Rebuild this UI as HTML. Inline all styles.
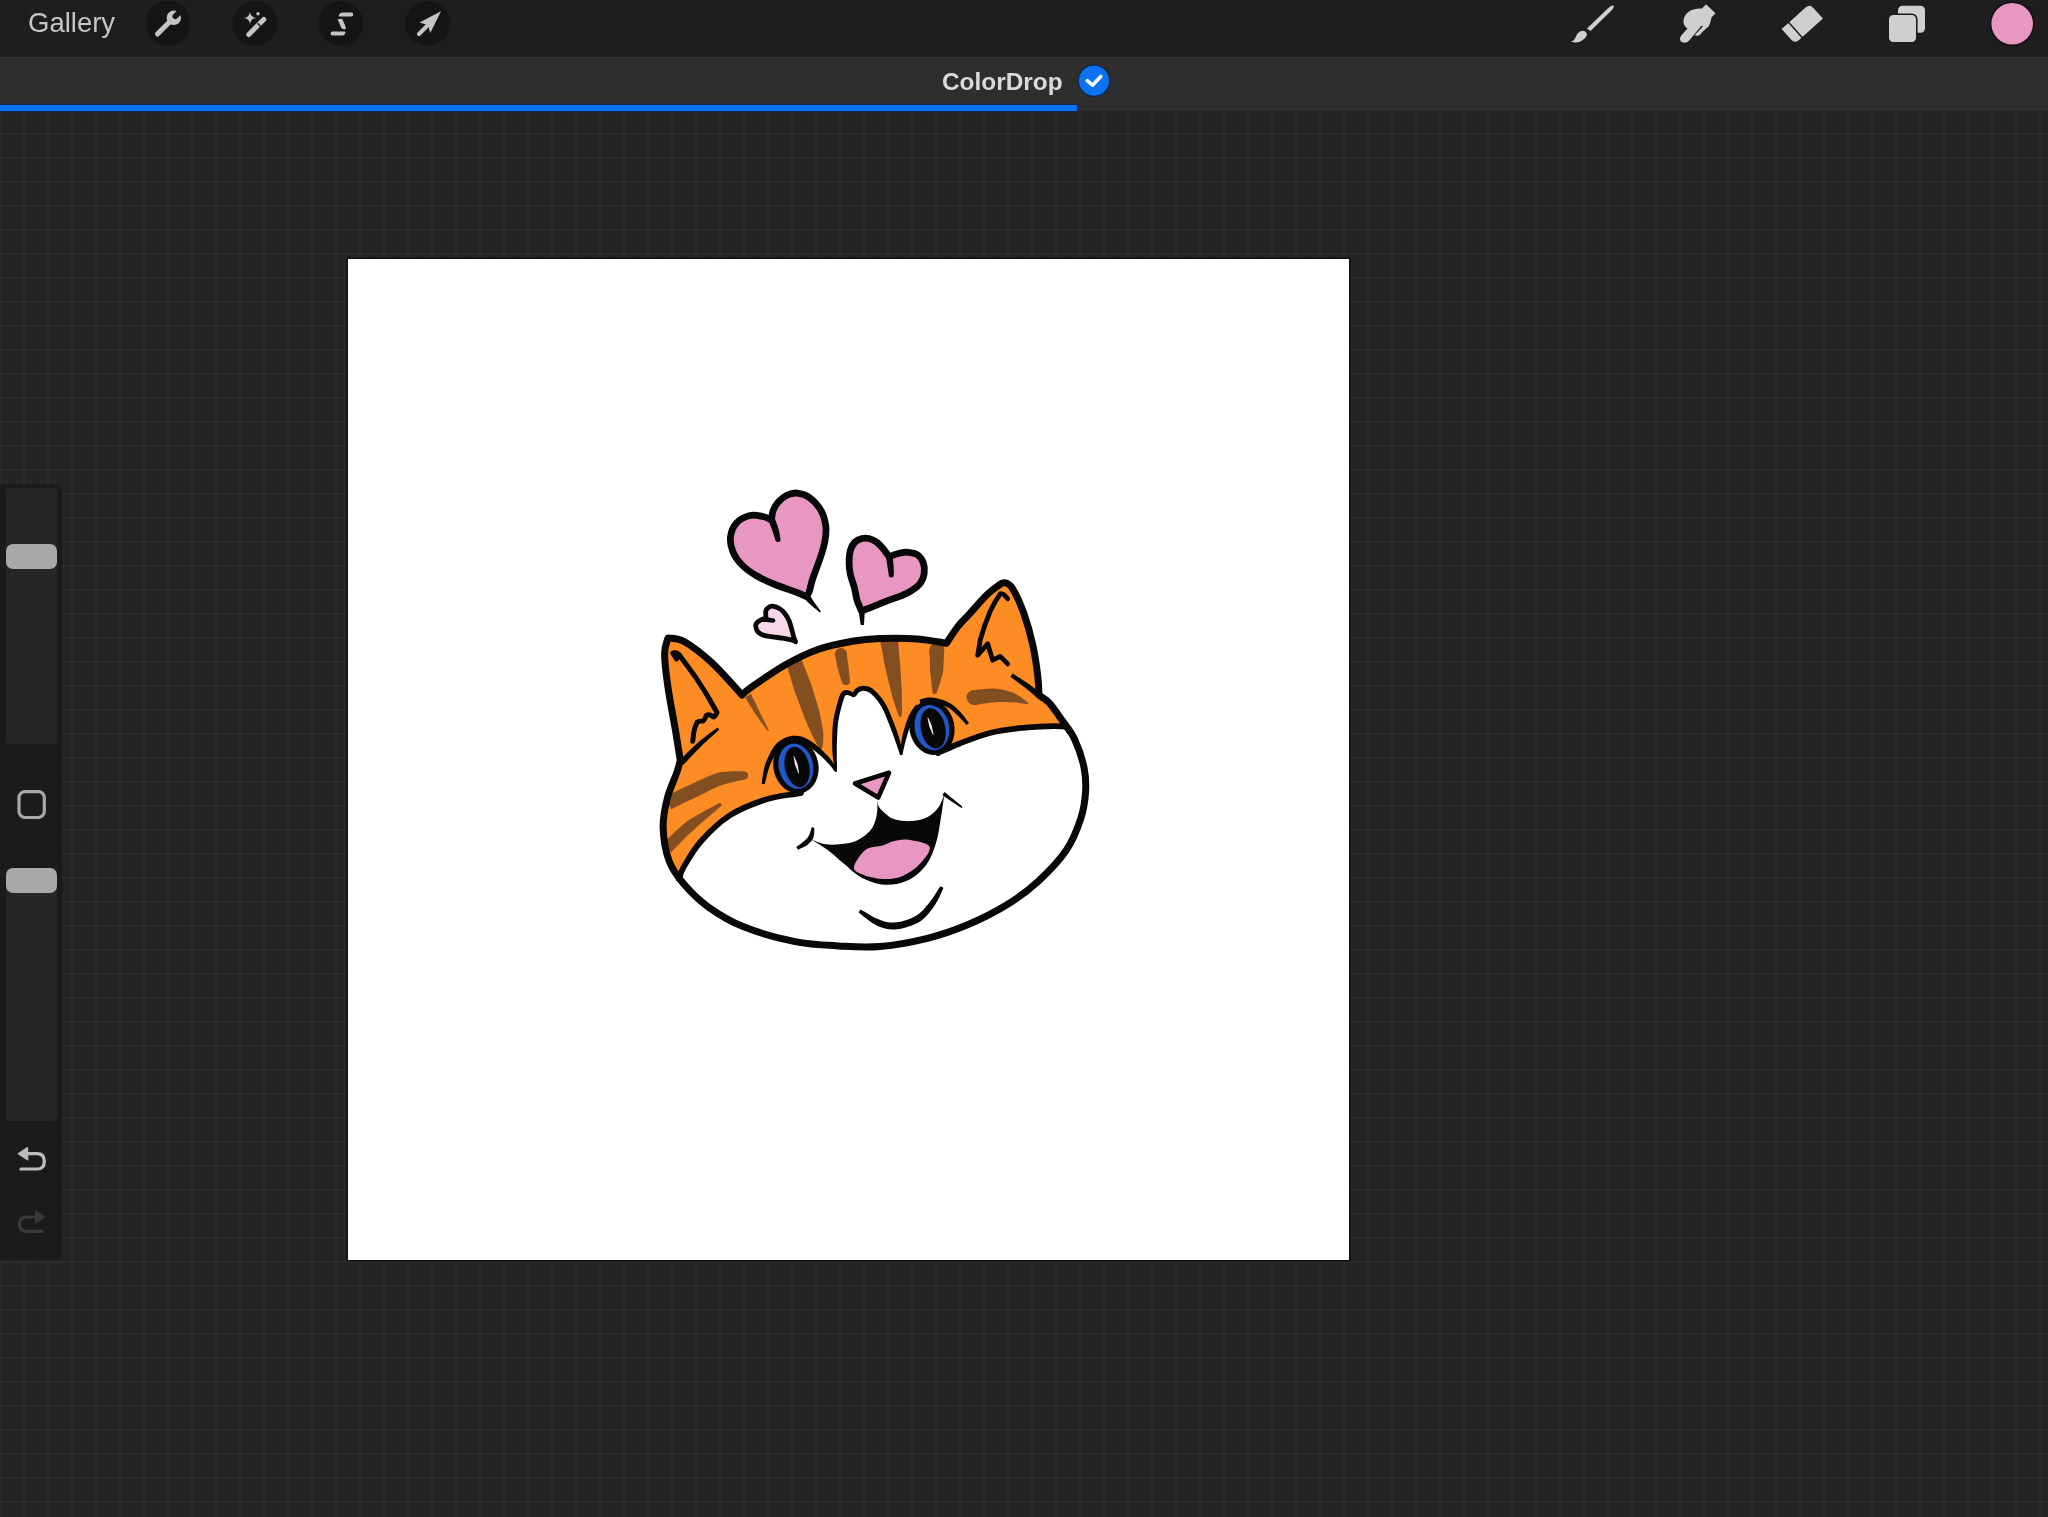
<!DOCTYPE html>
<html><head><meta charset="utf-8">
<style>
html,body{margin:0;padding:0;width:2048px;height:1517px;overflow:hidden;background:#242424;font-family:"Liberation Sans",sans-serif;}
.abs{position:absolute;}
#gallery,#title{will-change:transform;}
#grid{left:0;top:110px;width:2048px;height:1407px;
 background-color:#242424;
 background-image:linear-gradient(to right,#2c2c2c 0,#2c2c2c 2px,transparent 2px),linear-gradient(to bottom,#2c2c2c 0,#2c2c2c 2px,transparent 2px);
 background-size:24px 24px;background-position:-1px 23px;}
#top{left:0;top:0;width:2048px;height:57px;background:#1e1e1e;}
#tab{left:0;top:57px;width:2048px;height:53px;background:#2e2e2e;}
#prog{left:0;top:104.5px;width:1077px;height:6.5px;background:#0a74f0;box-shadow:0 0 1.5px 1px #0b2a55;}
#gallery{left:28px;top:5px;font-size:27.5px;color:#c6c6c6;line-height:36px;}
#title{left:942px;top:67.5px;font-size:24.4px;font-weight:bold;color:#dadada;line-height:28px;}
#canvas{left:348px;top:259px;width:1001px;height:1001px;background:#fff;box-shadow:0 0 0 1.5px #101010;}
#side{left:0;top:484px;width:62px;height:776px;background:#1b1b1b;border-radius:0 6px 6px 0;}
.track{position:absolute;left:6px;width:51px;background:#262626;border-radius:4px;}
.thumb{position:absolute;left:6px;width:51px;height:25px;background:#a9a9a9;border-radius:7px;}
</style></head><body>
<div id="grid" class="abs"></div>
<div id="top" class="abs"></div>
<div id="tab" class="abs"></div>
<div id="prog" class="abs"></div>
<div id="gallery" class="abs">Gallery</div>
<div id="title" class="abs">ColorDrop</div>
<svg class="abs" style="left:0;top:0" width="2048" height="110" viewBox="0 0 2048 110">
 <g fill="#151515">
  <circle cx="168" cy="23.5" r="22.5"/><circle cx="255" cy="23.5" r="22.5"/>
  <circle cx="341" cy="23.5" r="22.5"/><circle cx="427.5" cy="23.5" r="22.5"/>
 </g>
 <circle cx="2012.2" cy="23.8" r="22.5" fill="#150d12"/>
 <circle cx="2012.2" cy="23.8" r="20.8" fill="#e897c3"/>
 <g fill="#cfcfcf" stroke="none">
  <g fill="#c4c4c4"><!-- wrench -->
  <line x1="157.5" y1="34" x2="170" y2="21.5" stroke="#c4c4c4" stroke-width="5" stroke-linecap="round"/>
  <circle cx="173.8" cy="17.8" r="7.2"/>
  <line x1="175.3" y1="16.3" x2="183" y2="8.6" stroke="#151515" stroke-width="5.6" stroke-linecap="round"/>
  <!-- wand -->
  <line x1="248.8" y1="34.5" x2="263.8" y2="19.5" stroke="#c4c4c4" stroke-width="5" stroke-linecap="round"/>
  <line x1="257.5" y1="23.2" x2="261" y2="26.7" stroke="#151515" stroke-width="1.3"/>
  <path d="M250 11.8 Q250.5 17.5 256.3 18 Q250.5 18.5 250 24.2 Q249.5 18.5 243.7 18 Q249.5 17.5 250 11.8Z"/>
  <circle cx="258" cy="13.8" r="1.7"/>
  <!-- selection S -->
  <path d="M338.6 15.2 Q339.5 12.6 342.5 12.6 L351.5 12.6 Q353.2 12.6 353.2 14.5 Q353.2 16.4 351.5 16.4 L339.5 16.4 Z"/>
  <path d="M337.6 19.2 L342.2 18.8 L345.6 26.8 Q346.3 29 345 29.6 L341.6 28.6 Z"/>
  <path d="M345.6 32.8 Q344.6 35.6 341.6 35.6 L332.4 35.6 Q330.6 35.6 330.6 33.6 Q330.6 31.6 332.4 31.6 L344.6 31.6 Z"/>
  <!-- arrow -->
  <line x1="419" y1="34" x2="431" y2="22" stroke="#c4c4c4" stroke-width="4" stroke-linecap="round"/>
  <path d="M441 11.2 L419.5 22.6 L428 25 L430.3 33 Z"/>
  </g><!-- brush -->
  <path d="M1613.5 5.5 Q1614.5 6.5 1612 10 L1590.5 31 L1587 28.5 L1607.5 8.8 Q1611.5 5 1613.5 5.5Z"/>
  <path d="M1586.8 33.2 Q1584 29.6 1580 31.5 Q1576.5 33.5 1575.5 37.5 Q1574.5 40.6 1571.2 41.8 Q1578 43.5 1582.5 40.2 Q1587.5 36.8 1586.8 33.2Z"/>
  <!-- smudge finger -->
  <path d="M1706 4.3 L1715.5 13.3 L1711.5 17.6 Q1710.8 22 1708.8 26.2 L1702.5 31.8 Q1700 35.8 1697 35.8 Q1695.5 36 1694.8 35 L1703 26.5 L1701.5 25.8 L1689.6 40 Q1687 43.5 1683.5 42.5 Q1679.5 41.5 1680 38.2 Q1680.5 36 1683 33.5 L1687.5 28.5 Q1683 25.5 1683.5 20.5 Q1684 14.5 1690.5 10.5 Q1696.8 7.8 1702 8.6 Z"/>
  <!-- eraser -->
  <g transform="translate(1802.3 23.8) rotate(-42) scale(0.92)">
   <path d="M-11 -10.8 L14.5 -10.8 Q20.5 -10.8 20.5 -4.8 L20.5 10.8 L-14.5 10.8 Q-20.5 10.8 -20.5 4.8 L-20.5 -10.8 Z"/>
   <line x1="-10" y1="-12" x2="-10" y2="12" stroke="#1c1c1c" stroke-width="1.6"/>
  </g>
  <!-- layers -->
  <rect x="1898" y="5.8" width="27" height="27" rx="4.5"/>
  <rect x="1888.2" y="14.2" width="28.6" height="28.6" rx="5" stroke="#1c1c1c" stroke-width="1.6"/>
 </g>
 <!-- check -->
 <circle cx="1094" cy="80.7" r="16.2" fill="#0b2a55"/>
 <circle cx="1094" cy="80.7" r="15" fill="#0d72f0"/>
 <path d="M1087.3 80.6 L1092.5 85.2 L1100.8 76.4" fill="none" stroke="#f4f8ff" stroke-width="3.6" stroke-linecap="round" stroke-linejoin="round"/>
</svg>
<div id="side" class="abs">
 <div class="track" style="top:4px;height:256px"></div>
 <div class="thumb" style="top:60px"></div>
 <div class="track" style="top:384px;height:253px"></div>
 <div class="thumb" style="top:384px"></div>
</div>
<svg class="abs" style="left:0;top:760px" width="70" height="480" viewBox="0 760 70 480">
 <rect x="19" y="791.7" width="25.3" height="25.8" rx="6" fill="none" stroke="#a9a9a9" stroke-width="3.2"/>
 <path d="M26 1153.7 L37 1153.7 Q44.3 1153.7 44.3 1161.4 Q44.3 1169 37 1169 L21 1169" fill="none" stroke="#bdbdbd" stroke-width="3.2" stroke-linecap="round"/>
 <path d="M18.2 1153.7 L27.5 1147.6 L27.8 1160 Z" fill="#bdbdbd" stroke="#bdbdbd" stroke-width="1.2" stroke-linejoin="round"/>
 <path d="M36 1217 L27 1217 Q19.5 1217 19.5 1224.2 Q19.5 1231.4 27 1231.4 L42 1231.4" fill="none" stroke="#3a3a3a" stroke-width="3.2" stroke-linecap="round"/>
 <path d="M44.4 1217 L35.6 1211 L35.4 1223 Z" fill="#3a3a3a" stroke="#3a3a3a" stroke-width="1.2" stroke-linejoin="round"/>
</svg>
<div id="canvas" class="abs"></div>
<!--CAT--><svg class="abs" style="left:0;top:0" width="2048" height="1517" viewBox="0 0 2048 1517">
<path d="M668 638C670.6 638.5 676.4 637.2 683.7 641.3C691 645.4 702.1 653.8 711.8 662.7C721.5 671.7 737 689.6 742 695C743.5 693.7 743.9 692.4 751.1 687.4C758.3 682.4 773.8 671.4 785 665C796.2 658.6 807.3 653.2 818.5 649.2C829.7 645.2 842 643.1 852.2 641.3C862.5 639.5 869.1 638.9 880 638.5C890.9 638.1 906.5 638.1 917.6 638.9C928.7 639.7 941.6 642.6 946.4 643.3C948.3 640.5 954.3 631.1 958 626.4C961.7 621.6 965.1 618.7 968.6 614.8C972.1 610.9 975.9 606.7 979.1 603.2C982.3 599.7 984.7 596.8 987.7 594C990.7 591.2 994.1 588.5 996.9 586.6C999.7 584.7 1001.9 582.4 1004.5 582.8C1007.1 583.2 1009.5 583.6 1012.7 588.8C1016 594 1020.6 604.4 1024 613.8C1027.3 623.2 1030.5 634.7 1032.8 645.1C1035.1 655.5 1036.8 668 1037.8 676.4C1038.8 684.8 1038.8 692.1 1039 695.2C1040.7 696.5 1045.2 698.6 1049 702.7C1052.8 706.8 1057.7 714 1061.9 720C1066.2 726 1070.8 731.1 1074.5 739C1078.2 746.9 1082.2 758.7 1084 767.4C1085.8 776.1 1086.1 782.8 1085.6 791.2C1085.1 799.7 1084.1 808.4 1080.9 818.1C1077.7 827.9 1073.7 839.2 1066.6 849.7C1059.5 860.2 1048.2 872.1 1038.2 881.3C1028.2 890.5 1018.4 897.7 1006.5 905C994.6 912.3 980.2 919.5 967 925C953.8 930.5 941.9 934.7 927.4 938.3C912.9 941.9 894.8 945.2 880 946.5C865.2 947.8 852.7 946.7 838.5 945.9C824.3 945.1 810.7 944.7 795 941.6C779.3 938.5 758.8 932.9 744.3 927.1C729.8 921.3 718.1 914 708 906.8C697.9 899.5 689.9 891.3 683.4 883.6C676.9 875.9 672.3 869.8 668.9 860.4C665.5 851 663.4 837.4 663.1 827C662.9 816.6 665.1 807.2 667.4 798C669.7 788.8 674.9 778.3 677 772C679.1 765.7 679.8 762.3 680.3 760.4C679.5 755.7 677.8 744.5 675.8 732.3C673.8 720.1 669.9 700.5 668 687.4C666.1 674.3 664.6 661.9 664.6 653.7C664.6 645.5 667.4 640.6 668 638Z" fill="#fff"/>
<defs><clipPath id="oc"><path d="M679 879C677.3 875.9 671.5 869.1 668.9 860.4C666.2 851.7 663.4 837.4 663.1 827C662.9 816.6 665.1 807.2 667.4 798C669.7 788.8 674.9 778.3 677 772C679.1 765.7 679.8 762.3 680.3 760.4C679.5 755.7 677.8 744.5 675.8 732.3C673.8 720.1 669.9 700.5 668 687.4C666.1 674.3 664.6 661.9 664.6 653.7C664.6 645.5 667.4 640.6 668 638C670.6 638.5 676.4 637.2 683.7 641.3C691 645.4 702.1 653.8 711.8 662.7C721.5 671.7 737 689.6 742 695C743.5 693.7 743.9 692.4 751.1 687.4C758.3 682.4 773.8 671.4 785 665C796.2 658.6 807.3 653.2 818.5 649.2C829.7 645.2 842 643.1 852.2 641.3C862.5 639.5 869.1 638.9 880 638.5C890.9 638.1 906.5 638.1 917.6 638.9C928.7 639.7 941.6 642.6 946.4 643.3C948.3 640.5 954.3 631.1 958 626.4C961.7 621.6 965.1 618.7 968.6 614.8C972.1 610.9 975.9 606.7 979.1 603.2C982.3 599.7 984.7 596.8 987.7 594C990.7 591.2 994.1 588.5 996.9 586.6C999.7 584.7 1001.9 582.4 1004.5 582.8C1007.1 583.2 1009.5 583.6 1012.7 588.8C1016 594 1020.6 604.4 1024 613.8C1027.3 623.2 1030.5 634.7 1032.8 645.1C1035.1 655.5 1036.8 668 1037.8 676.4C1038.8 684.8 1038.8 692.1 1039 695.2C1040.7 696.5 1045.2 698.6 1049 702.7C1052.8 706.8 1058.7 715.5 1061.9 720C1065.1 724.5 1067 728.3 1068 730C1067 729.4 1069.5 726.6 1061.9 726.3C1054.3 725.9 1034.2 726.8 1022.3 727.9C1010.4 729 1001.2 730.1 990.7 732.7C980.2 735.3 967.5 740.6 959.1 743.7C950.7 746.9 945.8 751.9 940.1 751.6C934.4 751.3 929.7 746.9 925 742C920.3 737.1 914.2 725.3 912 722C910.8 724.5 906.3 731.4 904.5 736.7C902.7 742 901.8 751.1 901.2 754C900.7 752 899.6 747 898 742C896.4 737 894.1 730 891.6 723.8C889.1 717.5 886.2 709.9 883 704.5C879.8 699.1 875.4 694.3 872.2 691.6C869 688.9 866.1 688.5 863.6 688.3C861.1 688.1 858.8 689.4 857.2 690.5C855.6 691.6 855.8 694.4 854 694.8C852.2 695.1 848.4 692.3 846.4 692.6C844.4 692.9 843.7 692.3 842 696.5C840.3 700.7 837.5 711.9 836.3 718C835.1 724.1 835.1 727.3 834.8 733C834.5 738.7 834.4 745.6 834.6 752C834.8 758.4 835.8 768.2 836 771.5C834.9 769.7 832.5 764.8 829.1 760.9C825.8 757 820.8 747.6 815.9 748.3C811 749 802.6 757.7 800 765C797.4 772.3 800 787.5 800 792C799.4 792.3 801.8 792.5 796.1 793.8C790.4 795 777 795.9 766 799.5C755 803.1 740.7 808.4 729.8 815.4C718.9 822.4 708.5 832.8 700.8 841.5C693.1 850.2 687 861.4 683.4 867.6C679.8 873.9 679.7 877.1 679 879Z"/></clipPath></defs>
<path d="M679 879C677.3 875.9 671.5 869.1 668.9 860.4C666.2 851.7 663.4 837.4 663.1 827C662.9 816.6 665.1 807.2 667.4 798C669.7 788.8 674.9 778.3 677 772C679.1 765.7 679.8 762.3 680.3 760.4C679.5 755.7 677.8 744.5 675.8 732.3C673.8 720.1 669.9 700.5 668 687.4C666.1 674.3 664.6 661.9 664.6 653.7C664.6 645.5 667.4 640.6 668 638C670.6 638.5 676.4 637.2 683.7 641.3C691 645.4 702.1 653.8 711.8 662.7C721.5 671.7 737 689.6 742 695C743.5 693.7 743.9 692.4 751.1 687.4C758.3 682.4 773.8 671.4 785 665C796.2 658.6 807.3 653.2 818.5 649.2C829.7 645.2 842 643.1 852.2 641.3C862.5 639.5 869.1 638.9 880 638.5C890.9 638.1 906.5 638.1 917.6 638.9C928.7 639.7 941.6 642.6 946.4 643.3C948.3 640.5 954.3 631.1 958 626.4C961.7 621.6 965.1 618.7 968.6 614.8C972.1 610.9 975.9 606.7 979.1 603.2C982.3 599.7 984.7 596.8 987.7 594C990.7 591.2 994.1 588.5 996.9 586.6C999.7 584.7 1001.9 582.4 1004.5 582.8C1007.1 583.2 1009.5 583.6 1012.7 588.8C1016 594 1020.6 604.4 1024 613.8C1027.3 623.2 1030.5 634.7 1032.8 645.1C1035.1 655.5 1036.8 668 1037.8 676.4C1038.8 684.8 1038.8 692.1 1039 695.2C1040.7 696.5 1045.2 698.6 1049 702.7C1052.8 706.8 1058.7 715.5 1061.9 720C1065.1 724.5 1067 728.3 1068 730C1067 729.4 1069.5 726.6 1061.9 726.3C1054.3 725.9 1034.2 726.8 1022.3 727.9C1010.4 729 1001.2 730.1 990.7 732.7C980.2 735.3 967.5 740.6 959.1 743.7C950.7 746.9 945.8 751.9 940.1 751.6C934.4 751.3 929.7 746.9 925 742C920.3 737.1 914.2 725.3 912 722C910.8 724.5 906.3 731.4 904.5 736.7C902.7 742 901.8 751.1 901.2 754C900.7 752 899.6 747 898 742C896.4 737 894.1 730 891.6 723.8C889.1 717.5 886.2 709.9 883 704.5C879.8 699.1 875.4 694.3 872.2 691.6C869 688.9 866.1 688.5 863.6 688.3C861.1 688.1 858.8 689.4 857.2 690.5C855.6 691.6 855.8 694.4 854 694.8C852.2 695.1 848.4 692.3 846.4 692.6C844.4 692.9 843.7 692.3 842 696.5C840.3 700.7 837.5 711.9 836.3 718C835.1 724.1 835.1 727.3 834.8 733C834.5 738.7 834.4 745.6 834.6 752C834.8 758.4 835.8 768.2 836 771.5C834.9 769.7 832.5 764.8 829.1 760.9C825.8 757 820.8 747.6 815.9 748.3C811 749 802.6 757.7 800 765C797.4 772.3 800 787.5 800 792C799.4 792.3 801.8 792.5 796.1 793.8C790.4 795 777 795.9 766 799.5C755 803.1 740.7 808.4 729.8 815.4C718.9 822.4 708.5 832.8 700.8 841.5C693.1 850.2 687 861.4 683.4 867.6C679.8 873.9 679.7 877.1 679 879Z" fill="#fd8c25"/>
<g clip-path="url(#oc)">
<path d="M744.9 697.2 745.7 698.4 746.7 699.9 747.9 701.8 749.1 704 750.5 706.3 752 708.6 753.4 711 754.8 713.3 756.5 715.5 758.3 718 760.1 720.7 762 723.3 763.9 725.8 765.5 728.1 767 729.9 768.1 731.3 768.9 730.7 768.2 729.1 767.2 727 766 724.5 764.6 721.7 763.1 718.9 761.7 716 760.3 713.2 759.2 710.7 758 708.4 756.8 706 755.6 703.5 754.4 701.1 753.4 698.9 752.4 696.9 751.7 695.2 751.1 693.8Z" fill="#834f21"/>
<path d="M784.9 658.4 785.6 661 786.6 664.4 787.8 668.5 789.1 673 790.6 677.7 792 682.4 793.3 686.9 794.5 690.9 795.8 694.5 797.2 698.1 798.5 701.6 799.8 704.9 801 708.2 802.2 711.4 803.3 714.5 804.4 717.4 805.6 720.2 806.7 722.8 807.9 725.4 808.9 727.8 809.9 730.1 810.9 732.3 811.8 734.4 812.7 736.4 813.7 738.3 814.8 740.2 815.7 742.1 816.7 743.9 817.6 745.6 818.4 747 819.3 748.3 820 749.2 822 748.8 822.3 747.7 822.6 746.2 822.9 744.5 823.1 742.6 823.2 740.5 823.3 738.3 823.3 736 823.3 733.6 823 731.3 822.7 728.9 822.3 726.4 821.8 723.9 821.4 721.2 820.8 718.4 820.2 715.6 819.6 712.6 818.8 709.5 817.8 706.3 816.9 703 815.9 699.6 814.8 696 813.8 692.5 812.6 688.8 811.5 685.1 810 681.2 808.3 676.8 806.5 672.2 804.7 667.6 803 663.2 801.5 659.3 800.1 656 799.1 653.6Z" fill="#834f21"/>
<path d="M834.6 653 834.8 654.1 835.1 655.6 835.5 657.5 835.9 659.5 836.3 661.6 836.7 663.8 837.2 666 837.6 668 838.2 670 838.8 672.1 839.4 674.3 840 676.4 840.6 678.4 841.2 680.2 841.7 681.7 842.1 682.8 849.9 681.2 849.9 680 849.7 678.4 849.5 676.6 849.3 674.5 849.1 672.3 848.8 670.1 848.6 668 848.4 666 848.1 664.1 847.8 662 847.5 659.8 847.2 657.6 847 655.6 846.7 653.8 846.6 652.2 846.4 651Z" fill="#834f21"/>
<path d="M880.1 641.3 880.6 643.4 881.2 646.3 881.9 649.7 882.6 653.5 883.3 657.5 884.1 661.5 884.9 665.5 885.6 669.1 886.4 672.5 887.2 675.9 888 679.4 888.8 682.8 889.7 686.2 890.5 689.5 891.3 692.7 892.1 695.8 893 698.8 894 702 895 705.1 896 708.2 897 711 897.9 713.5 898.8 715.6 899.5 717.2 901.5 716.8 901.7 715.1 901.9 712.8 901.9 710.2 902 707.2 902 704 901.9 700.7 901.9 697.4 901.9 694.2 901.8 691.1 901.6 687.8 901.4 684.4 901.2 681 901 677.5 900.8 673.9 900.6 670.4 900.4 666.9 900.1 663.3 899.7 659.3 899.3 655.2 898.9 651.2 898.6 647.3 898.3 643.8 898 640.9 897.9 638.7Z" fill="#834f21"/>
<path d="M929.3 649.9 929.4 651.7 929.5 653.9 929.7 656.6 929.8 659.6 929.9 662.7 930 665.8 930 668.9 930 671.7 930.5 674.5 930.8 677.6 931.2 680.8 931.5 684 931.8 687 932.2 689.8 932.6 692.1 933 693.9 936 694.1 936.8 692.5 937.6 690.3 938.5 687.7 939.5 684.8 940.4 681.6 941.3 678.5 942.2 675.3 943 672.3 943.2 669.3 943.5 666.1 943.6 662.9 943.8 659.7 943.9 656.7 944 654 944.2 651.7 944.3 650.1Z" fill="#834f21"/>
<path d="M974.9 704.9 976.5 704.7 978.6 704.4 981.1 704 983.7 703.6 986.5 703.2 989.3 702.9 991.8 702.6 994.1 702.5 996.2 702.3 998.3 702.1 1000.5 702 1002.6 702 1004.7 702 1006.8 702 1008.8 702.2 1010.8 702.4 1012.9 702.3 1015.2 702.5 1017.7 702.8 1020.1 703.2 1022.4 703.5 1024.5 703.8 1026.4 704 1027.8 704 1028.2 703 1027.2 702 1025.8 700.8 1024.1 699.5 1022.2 698.1 1020 696.6 1017.8 695.2 1015.5 693.9 1013.2 692.6 1010.9 691.9 1008.6 691.2 1006.3 690.6 1003.9 690 1001.5 689.6 999 689.1 996.5 688.8 993.9 688.5 991.1 688.5 988.1 688.7 985 688.9 982 689.2 979.2 689.5 976.7 689.7 974.6 689.9 973.1 690.1Z" fill="#834f21"/>
<path d="M671 809.3 673 808.4 675.5 807.1 678.5 805.7 681.9 804.1 685.4 802.3 689 800.6 692.6 798.9 696 797.3 699.3 795.7 702.7 794 706.1 792.3 709.4 790.6 712.7 789 715.9 787.5 719 786.3 721.9 785.2 724.7 784.2 727.8 783.2 731 782.4 734.3 781.7 737.4 781.1 740.2 780.5 742.6 780 744.5 779.5 743.5 771.5 741.7 771.4 739.3 771.3 736.4 771.3 733.1 771.3 729.5 771.4 725.8 771.7 721.9 772.1 718.1 772.8 714.5 773.9 710.9 775.3 707.3 776.8 703.7 778.4 700.1 780 696.7 781.6 693.3 783.2 690 784.7 686.6 786.2 683 788 679.3 789.7 675.8 791.4 672.4 793.1 669.4 794.5 666.9 795.8 665 796.7Z" fill="#834f21"/>
<path d="M671.2 852.3 672.9 850.5 675.1 848.2 677.7 845.5 680.6 842.5 683.7 839.3 687 836.1 690.3 833.1 693.5 830.3 696.7 827.1 700.6 823.6 704.7 820.1 708.9 816.5 713 813.1 716.6 810 719.7 807.3 721.9 805.2 720.1 802.8 717.4 804 713.8 805.9 709.6 808.2 704.9 810.7 700.1 813.5 695.3 816.3 690.7 819.1 686.5 821.7 682.9 824.7 679.3 827.9 675.8 831.1 672.5 834.3 669.5 837.3 666.8 839.9 664.5 842.1 662.8 843.7Z" fill="#834f21"/>
<g fill="#834f21"><circle cx="841" cy="654" r="6"/><circle cx="936.8" cy="650" r="7.5"/><circle cx="974" cy="697.5" r="7.5"/><circle cx="744" cy="775.5" r="4"/><circle cx="846" cy="681" r="4"/></g>
</g>
<path d="M668 638C670.6 638.5 676.4 637.2 683.7 641.3C691 645.4 702.1 653.8 711.8 662.7C721.5 671.7 737 689.6 742 695C743.5 693.7 743.9 692.4 751.1 687.4C758.3 682.4 773.8 671.4 785 665C796.2 658.6 807.3 653.2 818.5 649.2C829.7 645.2 842 643.1 852.2 641.3C862.5 639.5 869.1 638.9 880 638.5C890.9 638.1 906.5 638.1 917.6 638.9C928.7 639.7 941.6 642.6 946.4 643.3C948.3 640.5 954.3 631.1 958 626.4C961.7 621.6 965.1 618.7 968.6 614.8C972.1 610.9 975.9 606.7 979.1 603.2C982.3 599.7 984.7 596.8 987.7 594C990.7 591.2 994.1 588.5 996.9 586.6C999.7 584.7 1001.9 582.4 1004.5 582.8C1007.1 583.2 1009.5 583.6 1012.7 588.8C1016 594 1020.6 604.4 1024 613.8C1027.3 623.2 1030.5 634.7 1032.8 645.1C1035.1 655.5 1036.8 668 1037.8 676.4C1038.8 684.8 1038.8 692.1 1039 695.2C1040.7 696.5 1045.2 698.6 1049 702.7C1052.8 706.8 1057.7 714 1061.9 720C1066.2 726 1070.8 731.1 1074.5 739C1078.2 746.9 1082.2 758.7 1084 767.4C1085.8 776.1 1086.1 782.8 1085.6 791.2C1085.1 799.7 1084.1 808.4 1080.9 818.1C1077.7 827.9 1073.7 839.2 1066.6 849.7C1059.5 860.2 1048.2 872.1 1038.2 881.3C1028.2 890.5 1018.4 897.7 1006.5 905C994.6 912.3 980.2 919.5 967 925C953.8 930.5 941.9 934.7 927.4 938.3C912.9 941.9 894.8 945.2 880 946.5C865.2 947.8 852.7 946.7 838.5 945.9C824.3 945.1 810.7 944.7 795 941.6C779.3 938.5 758.8 932.9 744.3 927.1C729.8 921.3 718.1 914 708 906.8C697.9 899.5 689.9 891.3 683.4 883.6C676.9 875.9 672.3 869.8 668.9 860.4C665.5 851 663.4 837.4 663.1 827C662.9 816.6 665.1 807.2 667.4 798C669.7 788.8 674.9 778.3 677 772C679.1 765.7 679.8 762.3 680.3 760.4C679.5 755.7 677.8 744.5 675.8 732.3C673.8 720.1 669.9 700.5 668 687.4C666.1 674.3 664.6 661.9 664.6 653.7C664.6 645.5 667.4 640.6 668 638Z" fill="none" stroke="#080808" stroke-width="7" stroke-linejoin="round"/>
<path d="M679 879C679.7 877.1 679.8 873.9 683.4 867.6C687 861.4 693.1 850.2 700.8 841.5C708.5 832.8 718.9 822.4 729.8 815.4C740.7 808.4 755 803.1 766 799.5C777 795.9 790.3 794.9 796.1 793.8C801.9 792.7 800.2 793.1 801 793" fill="none" stroke="#080808" stroke-width="5.8" stroke-linecap="round"/>
<path d="M938 753C941.5 751.5 950.3 747.1 959.1 743.7C967.9 740.3 980.2 735.3 990.7 732.7C1001.2 730.1 1010.4 729 1022.3 727.9C1034.2 726.8 1054.1 725.8 1061.9 726.3C1069.7 726.8 1067.8 730.2 1069 731" fill="none" stroke="#080808" stroke-width="5.8" stroke-linecap="round"/>
<path d="M837 771.4 837 769.9 837 767.9 837 765.5 836.9 762.8 836.8 760 836.8 757.2 836.8 754.4 836.8 751.9 836.8 749.5 836.8 747.1 836.8 744.7 836.9 742.2 837 739.9 837.1 737.5 837.2 735.3 837.3 733.1 837.4 731.1 837.5 729.2 837.6 727.5 837.7 725.9 837.9 724.2 838.1 722.5 838.4 720.6 838.8 718.5 839.3 716 839.9 713.2 840.6 710.2 841.4 707.2 842.2 704.2 843 701.5 843.7 699.2 844.3 697.4 844.8 696.3 845.2 695.6 845.5 695.3 845.5 695.3 845.5 695.3 845.8 695.3 846.3 695.2 846.9 695.1 847.1 695 847.2 695 847.5 695 847.9 695.1 848.5 695.3 849 695.5 849.7 695.8 850.2 695.9 850.5 696 850.7 696.1 851 696.3 851.5 696.6 852.1 696.9 852.9 697.2 854 697.1 855.1 696.7 856 696.1 856.6 695.3 857.1 694.6 857.5 694 857.8 693.4 858.1 693 858.4 692.7 858.7 692.5 859.2 692.2 859.7 691.9 860.4 691.5 861 691.2 861.6 691 862.2 690.9 862.8 690.8 863.5 690.8 864.3 690.9 865.1 691 866 691.1 866.8 691.4 867.7 691.7 868.6 692.2 869.6 692.7 870.6 693.5 871.8 694.5 873 695.8 874.3 697.1 875.7 698.7 877.1 700.3 878.4 702.1 879.7 703.9 880.9 705.8 882 707.8 883.1 710 884.2 712.3 885.3 714.8 886.3 717.3 887.3 719.8 888.3 722.3 889.3 724.7 890.2 727.1 891.1 729.4 892 731.7 892.9 734.1 893.7 736.4 894.5 738.6 895.2 740.7 895.8 742.7 896.6 744.5 897.2 746.4 897.8 748.2 898.4 750 898.9 751.6 899.4 753.1 899.8 754.3 900.2 755.2 902.2 754.8 902.1 753.8 902 752.5 901.8 751 901.6 749.3 901.3 747.4 901 745.4 900.6 743.4 900.2 741.3 899.5 739.3 898.9 737.1 898.2 734.9 897.4 732.5 896.6 730.1 895.7 727.7 894.8 725.3 893.9 722.9 893 720.5 892 718 890.9 715.4 889.9 712.8 888.8 710.3 887.6 707.8 886.4 705.4 885.1 703.2 883.8 701.1 882.4 699.1 881 697.2 879.5 695.4 878 693.8 876.6 692.2 875.2 690.9 873.8 689.7 872.4 688.6 871.1 687.8 869.7 687.1 868.4 686.6 867.1 686.3 865.9 686 864.8 685.9 863.7 685.8 862.5 685.8 861.3 686 860.2 686.2 859.1 686.6 858.2 687 857.3 687.5 856.5 688 855.7 688.5 854.9 689.2 854.2 690.1 853.7 690.9 853.3 691.7 853 692.3 852.8 692.8 852.7 692.9 852.9 692.9 853.2 692.7 853.6 692.7 853.8 692.7 853.7 692.7 853.4 692.5 853 692.2 852.4 691.9 851.8 691.7 851.3 691.5 850.9 691.3 850.3 691 849.6 690.7 848.8 690.4 847.9 690.1 846.9 690 845.9 690.1 845.4 690.3 844.9 690.3 844 690.5 843 691 842 691.7 841.1 692.7 840.4 694 839.7 695.6 838.9 697.6 838.2 700.1 837.4 702.9 836.5 705.9 835.8 709 835 712.1 834.4 715 833.8 717.5 833.4 719.7 833.1 721.8 832.9 723.6 832.7 725.4 832.6 727.2 832.5 729 832.4 730.9 832.3 732.9 832.2 735.1 832.2 737.4 832.2 739.8 832.1 742.2 832.2 744.7 832.2 747.1 832.3 749.6 832.4 752.1 832.6 754.7 832.9 757.4 833.3 760.3 833.7 763.1 834 765.7 834.4 768.1 834.7 770.1 835 771.6Z" fill="#080808"/>
<path d="M902.2 755.2 902.6 753.8 903 751.9 903.5 749.8 904.1 747.3 904.6 744.8 905.3 742.2 906 739.6 906.7 737.2 907.3 734.9 908.1 732.4 908.9 729.8 909.7 727.3 910.6 724.8 911.5 722.5 912.3 720.3 913.2 718.3 914 716.6 914.9 714.9 915.9 713.3 916.9 711.9 917.9 710.5 918.7 709.3 919.5 708.3 920.1 707.4 915.9 704.6 915.4 705.4 914.7 706.4 913.8 707.6 912.8 709 911.7 710.6 910.6 712.4 909.6 714.3 908.6 716.3 907.8 718.4 906.9 720.8 906 723.2 905.2 725.8 904.4 728.5 903.6 731.1 902.9 733.7 902.3 736.2 901.9 738.7 901.5 741.4 901.1 744.1 900.8 746.8 900.6 749.3 900.4 751.5 900.3 753.4 900.2 754.8Z" fill="#080808"/>
<path d="M764.7 784.3 765 783.2 765.3 781.7 765.8 779.9 766.2 778 766.7 776 767.2 774 767.7 772.2 768.2 770.6 768.6 769.2 769 767.9 769.4 766.7 769.8 765.5 770.3 764.4 770.8 763.3 771.4 762.1 772 760.7 772.8 759.2 773.7 757.5 774.6 755.8 775.5 754.1 776.5 752.4 777.6 750.9 778.6 749.5 779.7 748.3 780.8 747.2 782.1 746.1 783.4 745.1 784.8 744.2 786.2 743.4 787.6 742.7 789 742.2 790.3 741.8 791.7 741.5 793.1 741.3 794.5 741.2 795.9 741.2 797.4 741.3 798.8 741.6 800.3 741.9 801.8 742.4 803.2 743 804.7 743.7 806.2 744.6 807.8 745.6 809.3 746.7 810.9 747.9 812.5 749.1 814.2 750.4 815.9 751.7 817.6 753.2 819.4 754.7 821.2 756.3 822.9 757.9 824.5 759.4 826 761 827.4 762.4 828.6 763.7 829.8 765 831 766.4 832 767.8 832.9 769.1 833.8 770.3 834.5 771.3 835.1 772 836.9 771 836.5 770.1 836 769 835.5 767.7 834.8 766.2 834 764.5 833 762.8 832 761.1 830.8 759.4 829.5 757.8 828 756.1 826.3 754.4 824.6 752.7 822.9 750.9 821.1 749.2 819.3 747.6 817.6 746.2 815.9 744.8 814.3 743.5 812.6 742.2 810.8 741 809.1 739.9 807.3 738.9 805.5 738 803.6 737.2 801.8 736.6 799.9 736.2 798.1 735.9 796.2 735.7 794.4 735.7 792.5 735.8 790.7 736 788.9 736.4 787.1 737 785.3 737.7 783.6 738.6 781.9 739.5 780.2 740.6 778.6 741.8 777.1 743.1 775.7 744.5 774.4 746.1 773.1 747.8 772 749.7 770.9 751.5 770 753.4 769.1 755.2 768.3 756.9 767.6 758.5 766.9 760 766.3 761.3 765.8 762.7 765.3 764 764.9 765.2 764.6 766.6 764.2 767.9 763.8 769.4 763.5 771.2 763.1 773.1 762.8 775.2 762.5 777.3 762.2 779.3 762 781.1 761.8 782.6 761.7 783.7Z" fill="#080808"/>
<path d="M920.5 704.4 921.4 704.3 922.6 704 923.8 703.7 925.2 703.4 926.7 703.1 928.2 702.9 929.6 702.9 931.1 702.9 932.7 703.1 934.6 703.4 936.6 703.8 938.7 704.2 940.8 704.8 942.8 705.4 944.7 706.1 946.3 706.8 947.8 707.5 949.1 708.3 950.4 709.2 951.7 710.1 952.9 711.2 954.1 712.3 955.4 713.4 956.6 714.6 958 715.8 959.4 717.2 960.8 718.7 962.2 720.2 963.6 721.7 964.8 723 965.8 724.2 966.7 725 968.9 723 968.3 722.1 967.4 720.9 966.3 719.4 965.1 717.8 963.8 716.1 962.4 714.5 961.1 712.8 959.8 711.4 958.5 710.1 957.3 708.9 956 707.7 954.7 706.5 953.3 705.4 951.9 704.2 950.2 703.2 948.5 702.2 946.6 701.4 944.5 700.6 942.3 699.8 940 699.2 937.8 698.6 935.6 698.1 933.5 697.7 931.5 697.5 929.5 697.4 927.6 697.6 925.8 697.9 924.1 698.3 922.6 698.7 921.3 699.1 920.2 699.4 919.5 699.6Z" fill="#080808"/>
<path d="M676.5 659 L672.8 653.2 Q676 651.5 679 654.5 L694.9 676.2 Q707 694 717 712.5 Q714.5 718 712.9 716.6 Q709 713.5 706.2 715.5 Q704.5 720.5 702.8 721.1 Q699 721 697.2 722.2 Q694.5 727 693.8 732.3 L692.7 741.3" fill="none" stroke="#080808" stroke-width="5" stroke-linejoin="round" stroke-linecap="round"/>
<path d="M717.7 727.5 716.2 728.6 714.2 730 711.8 731.7 709.2 733.6 706.5 735.7 703.6 737.9 700.9 740 698.3 742.2 695.8 744.5 693.1 747 690.3 749.7 687.6 752.3 685 754.9 682.7 757.2 680.7 759.1 679.3 760.5 683.5 764.7 684.9 763.2 686.8 761.2 689 758.8 691.5 756.2 694.1 753.5 696.8 750.7 699.3 748.2 701.7 745.8 704 743.6 706.5 741.2 709.1 738.8 711.6 736.5 714 734.4 716.2 732.4 718 730.8 719.3 729.5Z" fill="#080808"/>
<path d="M1007.7 598.8 Q1003 592.5 1000.2 593.8 Q995 601 990.2 611.3 Q984 626 980.2 640.1 L977.7 655.1 L987.7 643.9 L992.7 660.2 L1000.2 656.4 L1007.7 663.9" fill="none" stroke="#080808" stroke-width="4.8" stroke-linejoin="round" stroke-linecap="round"/>
<path d="M1010.4 676.9 1011.4 677.6 1012.7 678.6 1014.4 679.8 1016.2 681.1 1018.1 682.5 1020 683.9 1021.8 685.2 1023.5 686.5 1025.2 687.8 1027 689.3 1028.8 690.8 1030.7 692.3 1032.4 693.7 1033.9 695 1035.2 696 1036.2 696.9 1039.8 692.1 1038.8 691.4 1037.4 690.4 1035.8 689.2 1034 687.9 1032.1 686.5 1030.2 685.1 1028.3 683.7 1026.5 682.5 1024.7 681.3 1022.7 680 1020.7 678.6 1018.7 677.4 1016.8 676.2 1015.1 675.1 1013.7 674.2 1012.6 673.5Z" fill="#080808"/>
<g transform="translate(795.9 766.2) rotate(-12)"><ellipse cx="0" cy="0" rx="22.5" ry="27.6" fill="#080808"/><ellipse cx="0" cy="0" rx="17.2" ry="22.8" fill="#2257c8"/><ellipse cx="1" cy="1" rx="12.2" ry="20.5" fill="#080808"/></g><path d="M793.6 756.1 793.6 756.8 793.8 757.7 793.9 758.7 794.2 759.9 794.4 761.2 794.6 762.4 794.8 763.7 795.1 764.9 795.5 766 796 767.2 796.5 768.5 797 769.7 797.4 770.9 797.9 772 798.2 772.9 798.6 773.6 799 773.4 799 772.7 798.8 771.7 798.7 770.6 798.5 769.3 798.2 768 798 766.6 797.8 765.3 797.5 764.1 797.1 763 796.6 761.8 796.1 760.6 795.6 759.5 795.2 758.4 794.7 757.4 794.4 756.5 794 755.9Z" fill="#e8e8e8"/>
<g transform="translate(931.9 727.6) rotate(-12)"><ellipse cx="0" cy="0" rx="22.5" ry="27.6" fill="#080808"/><ellipse cx="0" cy="0" rx="17.2" ry="22.8" fill="#2257c8"/><ellipse cx="1" cy="1" rx="12.2" ry="20.5" fill="#080808"/></g><path d="M927.6 717.6 927.6 718.3 927.8 719.2 928 720.2 928.2 721.4 928.5 722.7 928.8 724 929 725.2 929.3 726.4 929.7 727.5 930.3 728.7 930.8 730 931.3 731.3 931.8 732.5 932.3 733.5 932.7 734.4 933.1 735.1 933.5 734.9 933.4 734.2 933.3 733.2 933.1 732.1 932.8 730.8 932.5 729.5 932.2 728.1 932 726.8 931.7 725.6 931.3 724.5 930.7 723.3 930.2 722.1 929.7 721 929.2 719.8 928.8 718.9 928.4 718 928 717.4Z" fill="#e8e8e8"/>
<path d="M855 783.5 L889 772.8 L878.2 797.5 Z" fill="#e897c2" stroke="#080808" stroke-width="4.6" stroke-linejoin="round"/>
<path d="M812 840C814.3 840.7 821 843.6 825.6 844.3C830.2 845 834.6 844.9 839.8 844.3C844.9 843.7 851.4 843.1 856.5 840.7C861.6 838.3 867.4 834.1 870.7 830C874.1 825.9 875.5 821 876.6 815.8C877.7 810.6 877.4 801.8 877.5 799C877.7 800.2 877.5 803.8 878.5 806C879.5 808.2 881.1 810 883.8 812.2C886.4 814.4 889.7 817.8 894.4 819.3C899.1 820.8 906.7 821.5 912.2 821.1C917.8 820.7 923.3 819.3 927.7 817C932.1 814.7 935.6 811.2 938.4 807.5C941.2 803.8 943.3 796.7 944.3 794.5C943.7 798.6 942.1 811.2 940.7 819.3C939.3 827.4 938.4 835.6 936 843.1C933.6 850.6 931 858.3 926.5 864.4C922 870.5 915.6 876.5 908.7 879.9C901.8 883.3 892.8 885.2 884.9 884.8C877 884.4 868.1 881.1 861.2 877.5C854.3 873.9 848.9 867.8 843.4 863.3C837.9 858.8 833.2 854.1 828 850.2C822.8 846.3 814.7 841.7 812 840Z" fill="#080808"/>
<path d="M854.1 866.5C854.9 862.4 861.2 853 866 849.5C870.8 846 877.9 846.8 882.6 845.4C887.3 844 890 841.9 894.4 841C898.8 840.1 902.9 838.9 908.7 839.8C914.6 840.7 927.5 842.7 929.5 846.6C931.5 850.5 925 858.4 920.5 863.3C916 868.2 909 873.4 902.7 876C896.4 878.6 889.5 879.4 882.6 879C875.7 878.6 866 876 861.2 873.9C856.5 871.8 853.3 870.6 854.1 866.5Z" fill="#e897c2"/>
<path d="M797.9 849.7 798.5 849.4 799.4 849.1 800.5 848.6 801.7 848.1 802.9 847.5 804.2 846.8 805.4 846.2 806.6 845.5 807.5 844.7 808.4 843.9 809.3 843.1 810.1 842.3 811 841.4 811.8 840.4 812.6 839.3 813.3 838.1 813.7 836.7 813.9 835.2 814.1 833.6 814.2 832.1 814.3 830.7 814.3 829.5 814.3 828.5 814.2 827.7 811.8 827.3 811.5 828 811.2 829.1 810.9 830.3 810.5 831.5 810.1 832.8 809.7 834.1 809.2 835.1 808.7 835.9 808.3 836.6 807.8 837.4 807.2 838.1 806.6 838.8 805.9 839.5 805.1 840.2 804.3 840.9 803.4 841.5 802.7 842.3 801.7 843.1 800.7 843.9 799.7 844.6 798.6 845.4 797.7 846 796.9 846.6 796.3 847.1Z" fill="#080808"/>
<path d="M942.3 795.1 943 795.5 943.8 796.1 944.9 796.9 946.1 797.7 947.3 798.5 948.6 799.4 949.9 800.3 951.1 801.2 952.4 802.1 953.9 803 955.4 804.1 956.9 805.1 958.4 806 959.7 806.9 960.8 807.6 961.6 808.1 962.6 806.9 961.8 806.2 960.8 805.3 959.6 804.3 958.3 803.2 956.9 802.1 955.4 800.9 954.1 799.8 952.9 798.8 951.7 797.9 950.5 796.9 949.3 795.9 948.2 794.9 947.1 794 946.1 793.2 945.3 792.5 944.7 791.9Z" fill="#080808"/>
<path d="M858.5 912.5 859.9 913.6 861.8 915.1 864.2 916.9 866.8 918.9 869.5 920.9 872.3 922.9 875.1 924.6 877.7 926 880.2 927 882.5 927.8 884.9 928.4 887.2 928.9 889.6 929.3 892.1 929.5 894.6 929.5 897.2 929.3 900 928.9 902.9 928.3 905.8 927.5 908.8 926.6 911.8 925.5 914.7 924.3 917.5 922.9 920.1 921.5 922.4 919.7 924.6 917.8 926.6 915.8 928.5 913.7 930.2 911.6 931.8 909.5 933.3 907.3 934.8 905.3 936.2 903 937.6 900.5 938.9 897.9 940.1 895.4 941.2 893.1 942.1 891 942.9 889.2 943.4 887.8 940.4 886.2 939.5 887.4 938.5 889 937.3 891 935.9 893.2 934.5 895.4 933 897.7 931.5 899.8 930 901.7 928.5 903.7 926.9 905.6 925.3 907.6 923.6 909.4 921.9 911.2 920.1 912.8 918.3 914.3 916.3 915.5 914.2 916.8 911.8 917.9 909.3 919 906.6 919.9 903.9 920.8 901.3 921.5 898.7 922 896.4 922.3 894.2 922.5 892.2 922.6 890.3 922.5 888.3 922.3 886.4 921.9 884.4 921.4 882.4 920.8 880.3 920 877.9 919.1 875.2 917.9 872.4 916.4 869.5 914.7 866.8 913.1 864.2 911.6 862.1 910.4 860.5 909.5Z" fill="#080808"/>
<path d="M806 596.5C804.5 595.8 802.2 594.5 797 592.5C791.8 590.5 781.8 587.3 775 584.5C768.2 581.7 761.5 578.8 756 575.5C750.5 572.2 745.8 568.9 742 565C738.2 561.1 734.9 556.7 733 552C731.1 547.3 729.9 541.8 730.5 537C731.1 532.2 733.2 526.6 736.5 523C739.8 519.4 745.6 516.6 750 515.5C754.4 514.4 759.2 515.8 762.8 516.5C766.4 517.2 770 519.4 771.4 520C771.7 518.5 772 513.7 773.1 510.7C774.2 507.7 776 504.7 778.3 502.1C780.6 499.5 783.7 496.8 786.8 495.3C789.9 493.8 793.2 492.7 797.1 493.1C801 493.5 806 495 810 497.9C814 500.8 818.5 506 821.1 510.7C823.7 515.4 825.1 521.1 825.8 526.1C826.4 531.1 825.9 535.4 825 540.7C824.1 546 822.4 551.4 820.3 557.8C818.2 564.2 814.4 573.6 812.5 579.3C810.6 585 810.2 589.2 809.1 592.1C808 595 806.5 595.8 806 596.5Z" fill="#e897c2" stroke="#080808" stroke-width="6.8" stroke-linejoin="round"/>
<path d="M768.2 520.2 768.6 521.1 769 522.2 769.6 523.6 770.2 525.1 770.8 526.6 771.4 528.2 771.9 529.7 772.4 531 772.9 532.2 773.3 533.6 773.8 535 774.2 536.3 774.6 537.6 775 538.8 775.3 539.8 775.6 540.6 780.4 539.4 780.3 538.6 780.2 537.6 780 536.4 779.8 535 779.5 533.6 779.3 532 778.9 530.5 778.6 529 778.1 527.5 777.6 525.9 777 524.3 776.4 522.7 775.8 521.1 775.3 519.8 774.9 518.6 774.6 517.8Z" fill="#080808"/>
<circle cx="778" cy="539.5" r="2.5" fill="#080808"/>
<path d="M802 596.3 802.7 596.8 803.5 597.6 804.5 598.6 805.6 599.8 806.7 600.9 807.9 602.2 809.1 603.4 810.3 604.5 811.5 605.6 812.9 606.7 814.3 607.9 815.7 609.1 817 610.1 818.2 611.1 819.3 611.9 820.1 612.4 820.9 611.6 820.4 610.7 819.7 609.7 818.7 608.4 817.7 607.1 816.6 605.6 815.6 604.2 814.6 602.8 813.7 601.5 812.9 600.3 812 598.9 811.2 597.5 810.4 596.1 809.6 594.8 808.9 593.6 808.4 592.5 808 591.7Z" fill="#080808"/>
<path d="M861.5 611C860.8 609.2 858.2 604 857 600C855.8 596 855.4 591.5 854.3 587.3C853.2 583.1 851.4 579 850.5 575C849.6 571 849.1 567.2 849.1 563C849.1 558.8 849.5 553.5 850.5 550C851.5 546.5 853.1 543.9 855 542C856.9 540.1 859.7 539.1 862 538.5C864.3 537.9 866.5 537.9 869 538.5C871.5 539.1 874.5 540.6 876.8 542.3C879.1 544 880.9 546.1 883 548.5C885.1 550.9 888.2 555.5 889.2 556.9C890.2 556.5 893.1 555.1 895 554.5C896.9 553.9 898.2 553.4 900.3 553C902.3 552.6 904.5 552 907.3 552.2C910.1 552.5 914.4 552.8 917 554.5C919.6 556.2 922 559.3 923.2 562.5C924.4 565.7 924.8 569.9 924.2 573.5C923.6 577.1 922.5 580.7 919.7 583.9C916.9 587.1 912.8 590 907.3 592.9C901.8 595.8 892.9 598.7 886.5 601.2C880.1 603.7 873.4 606.5 869.2 608.1C865 609.7 862.8 610.5 861.5 611Z" fill="#e897c2" stroke="#080808" stroke-width="6.8" stroke-linejoin="round"/>
<path d="M885.8 556.4 886 557.2 886.2 558.3 886.4 559.5 886.6 560.9 886.8 562.3 887 563.7 887.2 565.1 887.4 566.3 887.6 567.5 887.8 568.8 888 570.1 888.2 571.4 888.4 572.6 888.5 573.6 888.7 574.5 888.8 575.2 893.8 574.8 893.8 574.1 893.8 573.2 893.8 572.1 893.8 570.9 893.7 569.6 893.7 568.3 893.6 566.9 893.6 565.7 893.5 564.4 893.3 562.9 893.2 561.5 893 560 892.9 558.6 892.7 557.4 892.6 556.3 892.6 555.6Z" fill="#080808"/>
<circle cx="891.3" cy="575" r="2.5" fill="#080808"/>
<path d="M858.3 607.2 858.4 607.9 858.5 609 858.7 610.3 858.9 611.6 859 613.1 859.2 614.5 859.4 615.9 859.5 617.1 859.7 618.2 859.8 619.4 860 620.6 860.2 621.7 860.3 622.7 860.5 623.7 860.7 624.5 860.8 625.1 863.8 624.9 863.9 624.3 864 623.5 864.1 622.6 864.2 621.6 864.3 620.4 864.3 619.2 864.4 618.1 864.5 616.9 864.5 615.7 864.6 614.3 864.6 612.8 864.6 611.4 864.6 610 864.7 608.7 864.7 607.6 864.7 606.8Z" fill="#080808"/>
<path d="M766 618C766 616.8 765.4 612.8 765.8 611C766.2 609.2 767.4 608.3 768.5 607.5C769.6 606.7 770.6 606 772.4 606.2C774.2 606.4 777.3 607.4 779.3 608.5C781.3 609.6 782.8 611 784.4 613C786 615 787.7 617.6 788.9 620.3C790.1 622.9 790.8 626.1 791.6 628.9C792.4 631.7 793.1 634.9 793.7 637C794.4 639.1 795.2 640.8 795.5 641.5C794.8 641.2 793.4 640.5 791.3 640C789.2 639.5 785.9 638.7 782.7 638.2C779.6 637.7 775.5 637.3 772.4 636.8C769.3 636.3 766.3 636.2 763.9 635.4C761.5 634.6 759.4 633.4 758 632C756.6 630.6 756.1 628.4 755.8 627C755.5 625.6 755.5 624.6 756.3 623.5C757.1 622.4 758.8 621.1 760.4 620.2C762 619.3 765.1 618.4 766 618Z" fill="#f7d7e8" stroke="#080808" stroke-width="4.8" stroke-linejoin="round"/>
<path d="M761.9 622 762.4 622 763.1 622 763.8 622 764.6 622 765.5 622.1 766.3 622.1 767.1 622.1 767.8 622.2 768.5 622.2 769.2 622.3 769.9 622.4 770.7 622.4 771.4 622.5 772 622.6 772.5 622.6 773 622.7 773.6 618.5 773.3 618.4 772.7 618.3 772.1 618.2 771.4 618 770.6 617.8 769.8 617.7 769 617.5 768.2 617.4 767.4 617.3 766.5 617.3 765.6 617.3 764.7 617.3 763.9 617.2 763.1 617.2 762.5 617.2 762.1 617.2Z" fill="#080808"/>
<circle cx="773.3" cy="620.6" r="2.1" fill="#080808"/>
<path d="M790.1 640.1 790.3 640.3 790.7 640.5 791 640.8 791.4 641.2 791.9 641.6 792.3 642 792.8 642.3 793.2 642.7 793.7 643 794.1 643.3 794.6 643.6 795 643.8 795.5 644.1 795.9 644.3 796.2 644.4 796.5 644.5 797.5 643.5 797.4 643.2 797.2 642.8 797 642.5 796.8 642 796.5 641.6 796.3 641.2 796 640.7 795.8 640.3 795.6 639.9 795.3 639.5 795 639 794.7 638.5 794.5 638 794.2 637.6 794.1 637.2 793.9 636.9Z" fill="#080808"/>
</svg><!--/CAT-->
</body></html>
